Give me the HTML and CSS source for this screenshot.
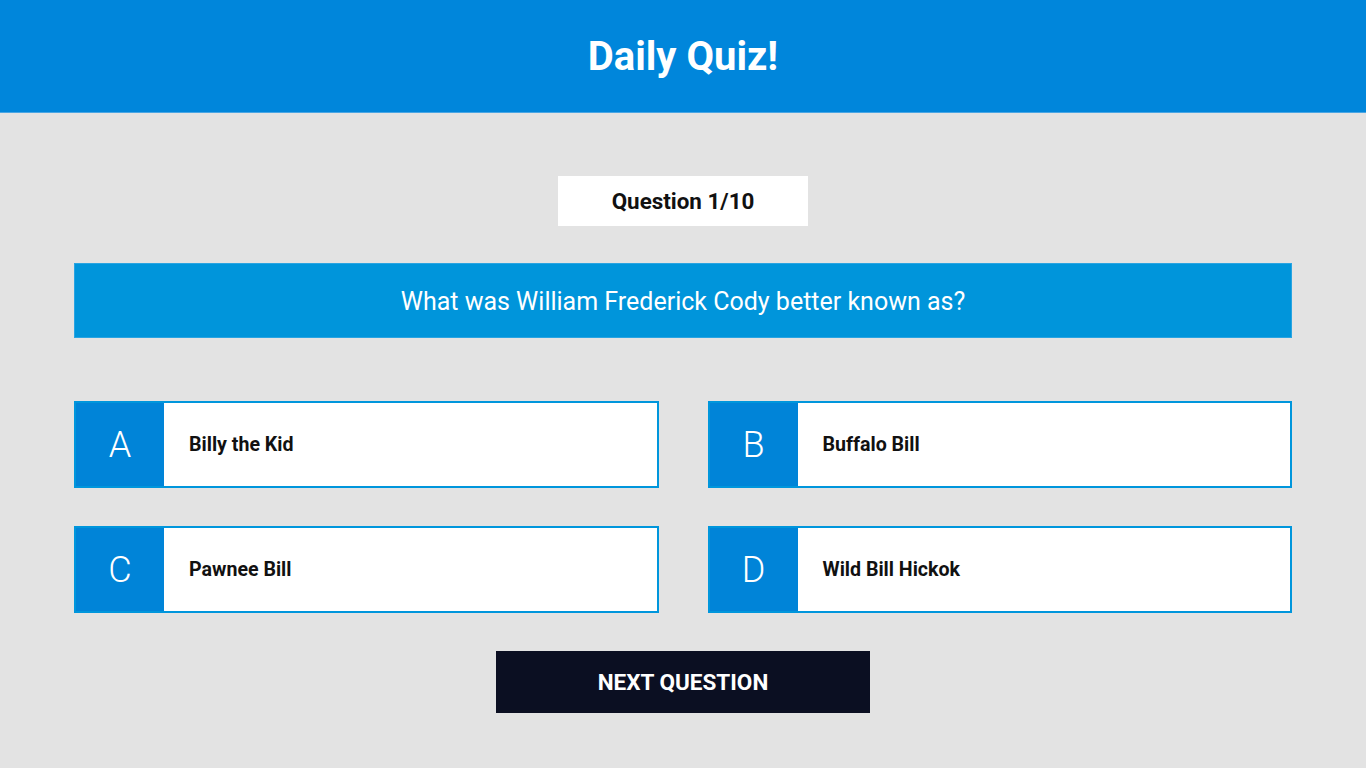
FILE: index.html
```html
<!DOCTYPE html>
<html lang="en">
<head>
<meta charset="utf-8">
<title>Daily Quiz!</title>
<link rel="stylesheet" href="styles.css">
</head>
<body>
<header class="top-bar">
  <h1 class="title">Daily Quiz!</h1>
</header>
<main class="quiz">
  <div class="counter">Question 1/10</div>
  <div class="question">What was William Frederick Cody better known as?</div>
  <div class="options">
    <div class="option"><span class="letter">A</span><span class="answer">Billy the Kid</span></div>
    <div class="option"><span class="letter">B</span><span class="answer">Buffalo Bill</span></div>
    <div class="option"><span class="letter">C</span><span class="answer">Pawnee Bill</span></div>
    <div class="option"><span class="letter">D</span><span class="answer">Wild Bill Hickok</span></div>
  </div>
  <button class="next">NEXT QUESTION</button>
</main>
</body>
</html>
```
FILE: styles.css
```css
* { box-sizing: border-box; }
html, body { margin: 0; padding: 0; }
body {
  background: #e3e3e3;
  font-family: Roboto, "Liberation Sans", sans-serif;
  min-height: 768px;
}
.top-bar {
  background: #0086db;
  height: 113px;
  border-bottom: 1px solid #4aa6e4;
  display: flex;
  align-items: center;
  justify-content: center;
}
.title {
  margin: 0;
  color: #fff;
  font-size: 40px;
  font-weight: 700;
  line-height: 1;
  padding-top: 1px;
}
.quiz {
  padding: 63px 74px 0 74px;
  display: flex;
  flex-direction: column;
  align-items: center;
}
.counter {
  width: 250px;
  height: 50px;
  background: #fff;
  display: flex;
  align-items: center;
  justify-content: center;
  font-size: 22.4px;
  font-weight: 700;
  color: #111;
}
.question {
  margin-top: 37px;
  width: 100%;
  height: 75px;
  background: #0095db;
  border: 1px solid #29a4e2;
  color: #fff;
  font-size: 25px;
  display: flex;
  align-items: center;
  justify-content: center;
  padding-top: 1px;
}
.options {
  margin-top: 63px;
  width: 100%;
  display: grid;
  grid-template-columns: 1fr 1fr;
  column-gap: 49px;
  row-gap: 38px;
}
.option {
  height: 87px;
  background: #fff;
  border: 2px solid #0096dc;
  display: flex;
  align-items: center;
}
.letter {
  width: 88px;
  height: 100%;
  background: #0084d8;
  color: #fff;
  font-size: 36px;
  font-weight: 300;
  display: flex;
  align-items: center;
  justify-content: center;
}
.answer {
  padding-left: 25px;
  font-size: 19.6px;
  font-weight: 700;
  color: #111;
}
.next {
  margin-top: 38px;
  width: 374px;
  height: 62px;
  background: #0b0f22;
  border: none;
  color: #fff;
  font-family: Roboto, "Liberation Sans", sans-serif;
  font-size: 22.5px;
  font-weight: 700;
  cursor: pointer;
}
```
